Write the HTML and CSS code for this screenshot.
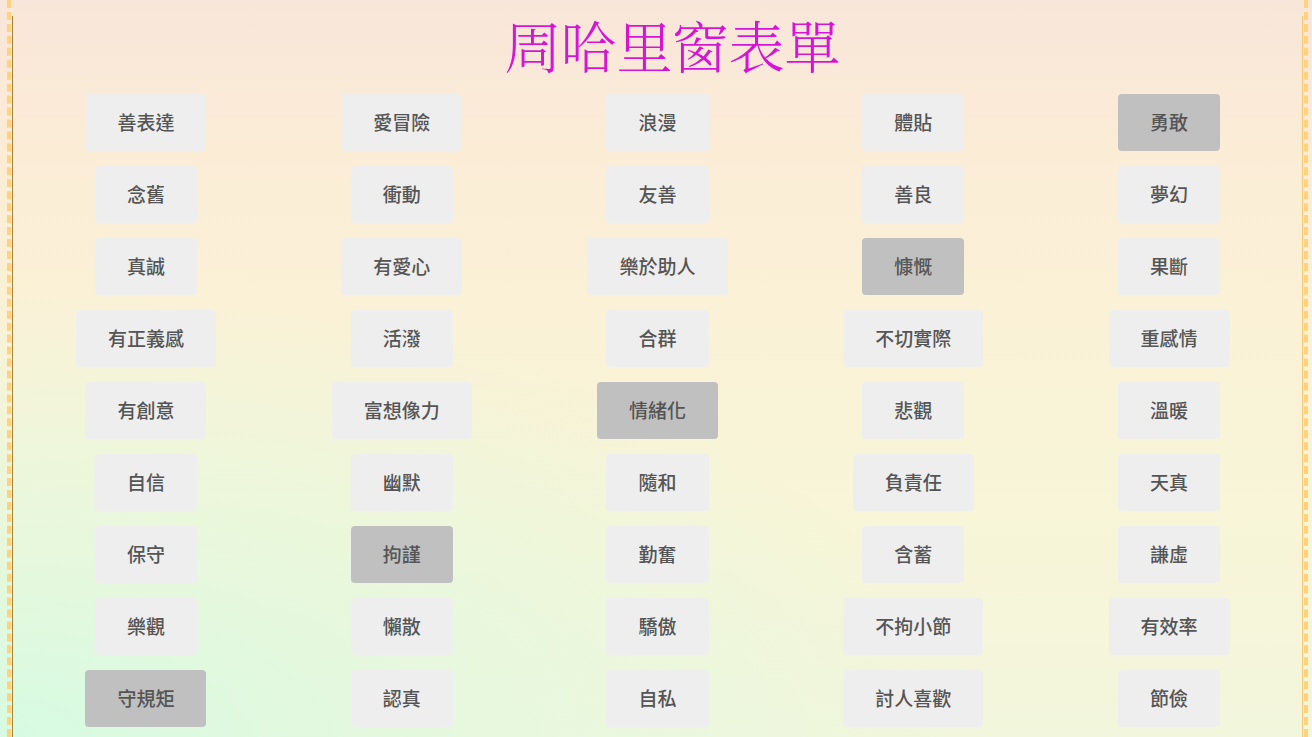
FILE: index.html
```html
<!DOCTYPE html>
<html lang="zh-Hant">
<head>
<meta charset="utf-8">
<title>周哈里窗表單</title>
<link rel="stylesheet" href="styles.css">
</head>
<body>
<div class="page">
  <div class="inner">
    <h1 class="title">周哈里窗表單</h1>
    <div class="grid">
      <button class="tag">善表達</button>
      <button class="tag">愛冒險</button>
      <button class="tag">浪漫</button>
      <button class="tag">體貼</button>
      <button class="tag selected">勇敢</button>

      <button class="tag">念舊</button>
      <button class="tag">衝動</button>
      <button class="tag">友善</button>
      <button class="tag">善良</button>
      <button class="tag">夢幻</button>

      <button class="tag">真誠</button>
      <button class="tag">有愛心</button>
      <button class="tag">樂於助人</button>
      <button class="tag selected">慷慨</button>
      <button class="tag">果斷</button>

      <button class="tag">有正義感</button>
      <button class="tag">活潑</button>
      <button class="tag">合群</button>
      <button class="tag">不切實際</button>
      <button class="tag">重感情</button>

      <button class="tag">有創意</button>
      <button class="tag">富想像力</button>
      <button class="tag selected">情緒化</button>
      <button class="tag">悲觀</button>
      <button class="tag">溫暖</button>

      <button class="tag">自信</button>
      <button class="tag">幽默</button>
      <button class="tag">隨和</button>
      <button class="tag">負責任</button>
      <button class="tag">天真</button>

      <button class="tag">保守</button>
      <button class="tag selected">拘謹</button>
      <button class="tag">勤奮</button>
      <button class="tag">含蓄</button>
      <button class="tag">謙虛</button>

      <button class="tag">樂觀</button>
      <button class="tag">懶散</button>
      <button class="tag">驕傲</button>
      <button class="tag">不拘小節</button>
      <button class="tag">有效率</button>

      <button class="tag selected">守規矩</button>
      <button class="tag">認真</button>
      <button class="tag">自私</button>
      <button class="tag">討人喜歡</button>
      <button class="tag">節儉</button>
    </div>
  </div>
</div>
</body>
</html>
```

FILE: styles.css
```css
html {
  height: 100%;
  background:
    radial-gradient(ellipse 75% 60% at 0% 100%, rgba(214, 251, 226, 1) 0%, rgba(222, 249, 223, 0.75) 35%, rgba(240, 248, 220, 0) 100%),
    linear-gradient(180deg, #f8e6da 0%, #fbecd6 20%, #faf2d7 45%, #f8f5d8 70%, #f2f6dc 100%);
}

body {
  margin: 0;
  height: 100%;
  font-family: "Noto Sans CJK TC", "Noto Sans", sans-serif;
}

.page {
  box-sizing: border-box;
  height: 100%;
  margin: 0 4px 0 7px;
  padding: 0 1px;
  border-left: 4px dashed #ffd27f;
  border-right: 4px dashed #ffd27f;
  overflow: hidden;
}

.inner {
  box-sizing: border-box;
  height: 100%;
  padding: 0 5px;
  border-left: 1px solid #a9813f;
  border-right: 1px solid #ffc86a;
}

.title {
  margin: 16px 0 0;
  padding-left: 30px;
  height: 56px;
  font-size: 56px;
  line-height: 56px;
  font-weight: 300;
  text-align: center;
  color: #d614d6;
  font-family: "Noto Serif CJK TC", "Noto Sans CJK TC", serif;
}

.grid {
  margin-top: 22px;
  display: grid;
  grid-template-columns: repeat(5, 1fr);
  row-gap: 15px;
  justify-items: center;
}

.tag {
  border: none;
  border-radius: 4px;
  background: #eeeeee;
  color: #555555;
  font-family: "Noto Sans CJK TC", "Noto Sans", sans-serif;
  font-size: 19px;
  font-weight: 500;
  line-height: 25px;
  padding: 15px 32px 17px;
  white-space: nowrap;
  cursor: pointer;
}

.tag.selected {
  background: #c0c0c0;
}
```
